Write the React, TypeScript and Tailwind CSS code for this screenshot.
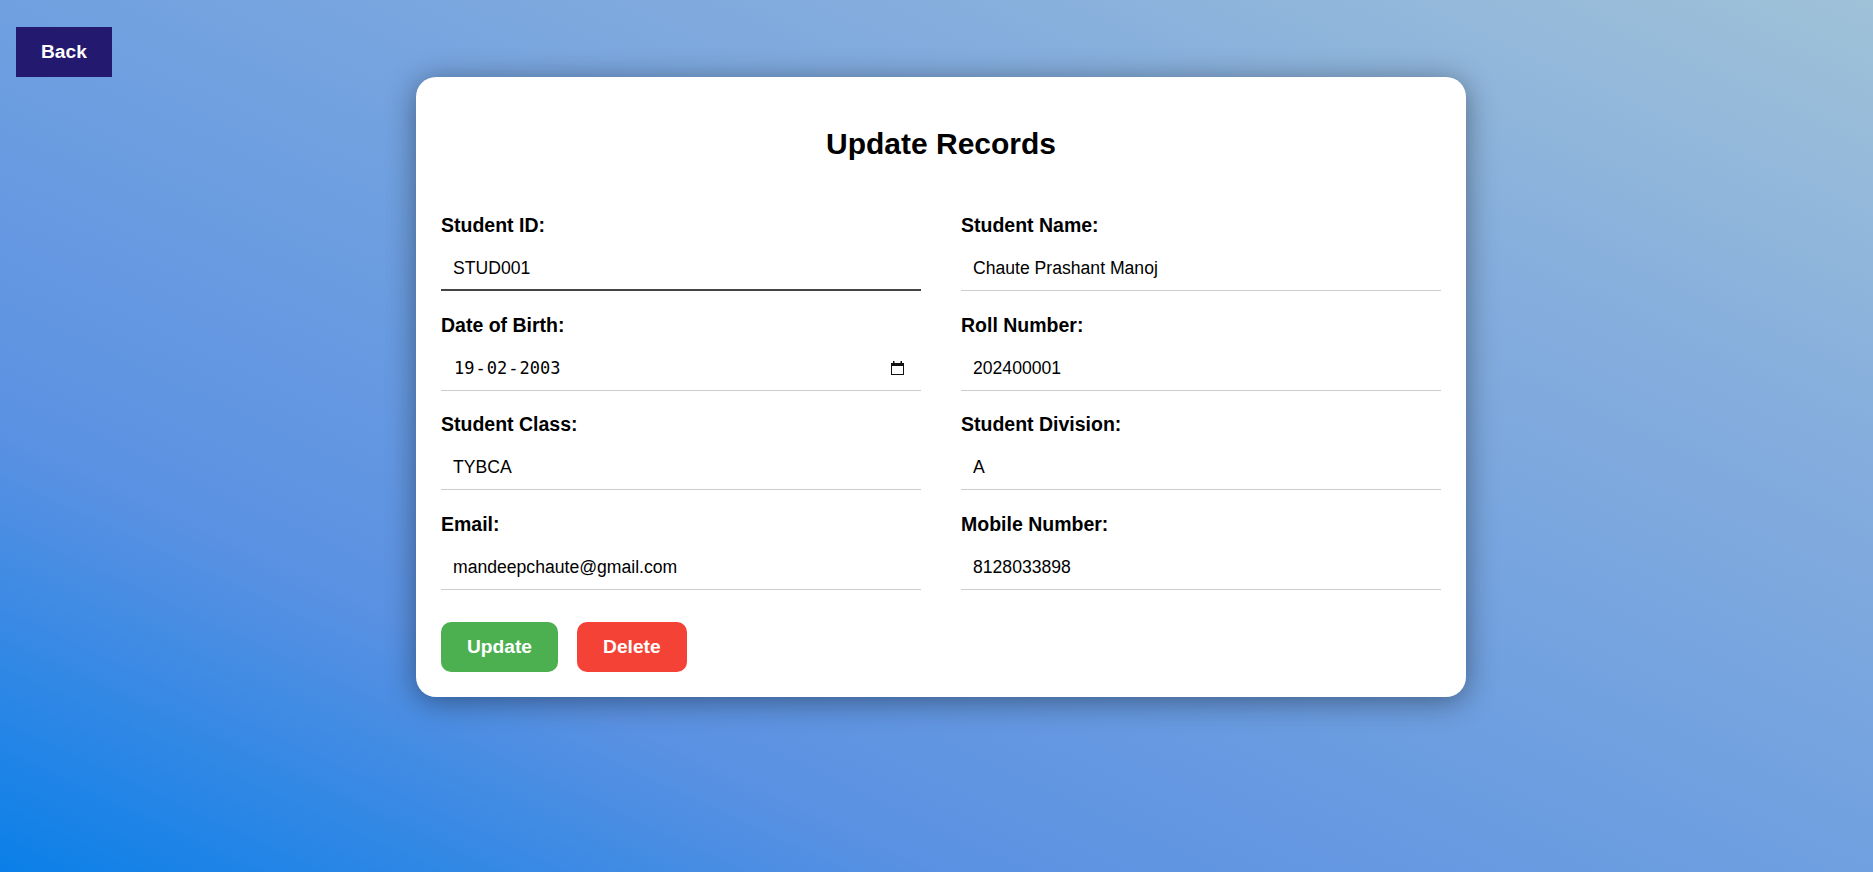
import React from "react";

type Field = { label: string; value: string; kind?: "date"; strong?: boolean };

const left: Field[] = [
  { label: "Student ID:", value: "STUD001", strong: true },
  { label: "Date of Birth:", value: "19-02-2003", kind: "date" },
  { label: "Student Class:", value: "TYBCA" },
  { label: "Email:", value: "mandeepchaute@gmail.com" },
];

const right: Field[] = [
  { label: "Student Name:", value: "Chaute Prashant Manoj" },
  { label: "Roll Number:", value: "202400001" },
  { label: "Student Division:", value: "A" },
  { label: "Mobile Number:", value: "8128033898" },
];

function CalendarIcon() {
  return (
    <svg width="13" height="14" viewBox="0 0 13 14" fill="none">
      <rect x="0.5" y="2.5" width="12" height="11" stroke="#111" strokeWidth="1" fill="none" />
      <rect x="0.5" y="2.5" width="12" height="2.5" fill="#111" />
      <rect x="2" y="0" width="1.5" height="3" fill="#111" />
      <rect x="9.5" y="0" width="1.5" height="3" fill="#111" />
    </svg>
  );
}

function DateText({ value }: { value: string }) {
  const parts = value.split("-");
  return (
    <span className="font-['DejaVu_Sans_Mono',monospace] text-[17px] leading-[20px] text-black">
      {parts.map((p, i) => (
        <React.Fragment key={i}>
          {i > 0 && <span className="mx-[1px]">-</span>}
          {p}
        </React.Fragment>
      ))}
    </span>
  );
}

function FieldBlock({ f }: { f: Field }) {
  return (
    <div className="mb-[22.5px]">
      <div className="text-[19.5px] leading-[22px] font-bold text-black mb-[14px]">{f.label}</div>
      {f.kind === "date" ? (
        <div className="flex items-center justify-between pl-[13px] pr-[17px] pt-[8px] pb-[12px] border-b border-[#cccccc]">
          <DateText value={f.value} />
          <CalendarIcon />
        </div>
      ) : f.strong ? (
        <div className="pl-[12px] pt-[8px] pb-[11px] border-b-2 border-[#444444] text-[17.6px] leading-[20px] text-black">
          {f.value}
        </div>
      ) : (
        <div className="pl-[12px] pt-[8px] pb-[12px] border-b border-[#cccccc] text-[17.6px] leading-[20px] text-black">
          {f.value}
        </div>
      )}
    </div>
  );
}

export default function App() {
  return (
    <div className="min-h-screen flex flex-col pt-[27px] font-['Liberation_Sans',Arial,sans-serif] bg-[linear-gradient(to_top_right,#0a7fe8_0%,#5a91e2_25%,#70a0e0_50%,#86aedd_75%,#9fc2d8_100%)]">
      <button className="self-start ml-4 h-[50px] px-[25px] bg-[#23196e] text-white font-bold text-[19.2px] leading-[22px]">
        Back
      </button>
      <div className="flex justify-center pl-[9px]">
        <div className="w-[1050px] bg-white rounded-[20px] p-[25px] shadow-[0_4px_30px_rgba(0,0,0,0.42)]">
          <h2 className="mt-[26px] mb-[54px] text-center text-[30px] leading-[32px] font-bold text-black">
            Update Records
          </h2>
          <div className="grid grid-cols-2 gap-x-[40px]">
            <div>
              {left.map((f) => (
                <FieldBlock key={f.label} f={f} />
              ))}
            </div>
            <div>
              {right.map((f) => (
                <FieldBlock key={f.label} f={f} />
              ))}
            </div>
          </div>
          <div className="flex gap-[19px] mt-[9.5px]">
            <button className="h-[50px] px-[26px] rounded-[10px] bg-[#4caf50] text-white font-bold text-[19.2px] leading-[22px]">
              Update
            </button>
            <button className="h-[50px] px-[26px] rounded-[10px] bg-[#f44336] text-white font-bold text-[19.2px] leading-[22px]">
              Delete
            </button>
          </div>
        </div>
      </div>
    </div>
  );
}
